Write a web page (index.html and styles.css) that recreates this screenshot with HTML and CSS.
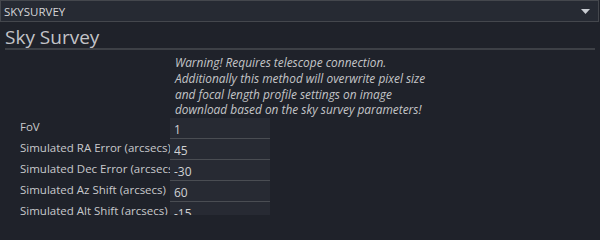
FILE: index.html
```html
<!DOCTYPE html>
<html lang="en">

<head>
    <meta charset="UTF-8">
    <title>Sky Survey</title>
    <link rel="stylesheet" href="styles.css">
</head>

<body>
    <div class="combo">
        <span>SKYSURVEY</span>
        <svg class="arrow" width="9" height="5" viewBox="0 0 9 5"><path d="M0 0 H9 L4.5 5 Z" fill="#c9ccd2"/></svg>
    </div>

    <div class="panel">
        <h1>Sky Survey</h1>

        <p class="warning">Warning! Requires telescope connection.<br>
            Additionally this method will overwrite pixel size<br>
            and focal length profile settings on image<br>
            download based on the sky survey parameters!</p>

        <div class="fields">
            <div class="row">
                <label>FoV</label>
                <input type="text" value="1">
            </div>
            <div class="row">
                <label>Simulated RA Error (arcsecs)</label>
                <input type="text" value="45">
            </div>
            <div class="row">
                <label>Simulated Dec Error (arcsecs)</label>
                <input type="text" value="-30">
            </div>
            <div class="row">
                <label>Simulated Az Shift (arcsecs)</label>
                <input type="text" value="60">
            </div>
            <div class="row">
                <label>Simulated Alt Shift (arcsecs)</label>
                <input type="text" value="-15">
            </div>
        </div>
    </div>
</body>
</html>
```

FILE: styles.css
```css
:root {
    --bg-color: #1f222a;
    --field-bg: #272a33;
    --border: #3d4046;
    --text-color: #c8c9cc;
}

* {
    margin: 0;
    padding: 0;
    box-sizing: border-box;
}

body {
    width: 600px;
    height: 240px;
    overflow: hidden;
    font-family: 'Open Sans', 'Noto Sans', sans-serif;
    font-size: 11.5px;
    background-color: var(--bg-color);
    color: var(--text-color);
}

.combo {
    display: flex;
    justify-content: space-between;
    align-items: center;
    height: 22px;
    margin-right: 1px;
    padding: 0 8px 0 3px;
    background-color: #262a33;
    border: 1px solid #44474d;
    color: #d4d5d8;
    font-size: 11.5px;
}

.panel {
    padding: 0 5px;
}

h1 {
    font-size: 19px;
    font-weight: normal;
    color: #c3c4c8;
    padding-top: 3px;
    height: 28px;
    line-height: 24px;
    border-bottom: 2px solid var(--border);
}

.warning {
    margin: 5px 0 0 170px;
    font-style: italic;
    line-height: 15.75px;
    font-size: 11.9px;
    color: #c4c5c8;
}

.fields {
    margin-left: 15px;
    height: 97px;
    overflow: hidden;
}

.row {
    display: flex;
    align-items: stretch;
    height: 21px;
}

.row label {
    width: 150px;
    white-space: nowrap;
    overflow: hidden;
    line-height: 17px;
}

.row input {
    width: 100px;
    height: 21px;
    padding: 2px 4px 0;
    background-color: var(--field-bg);
    border: none;
    border-bottom: 1px solid #4a4d53;
    color: #d0d1d4;
    font-family: inherit;
    font-size: 12px;
    outline: none;
}
```
